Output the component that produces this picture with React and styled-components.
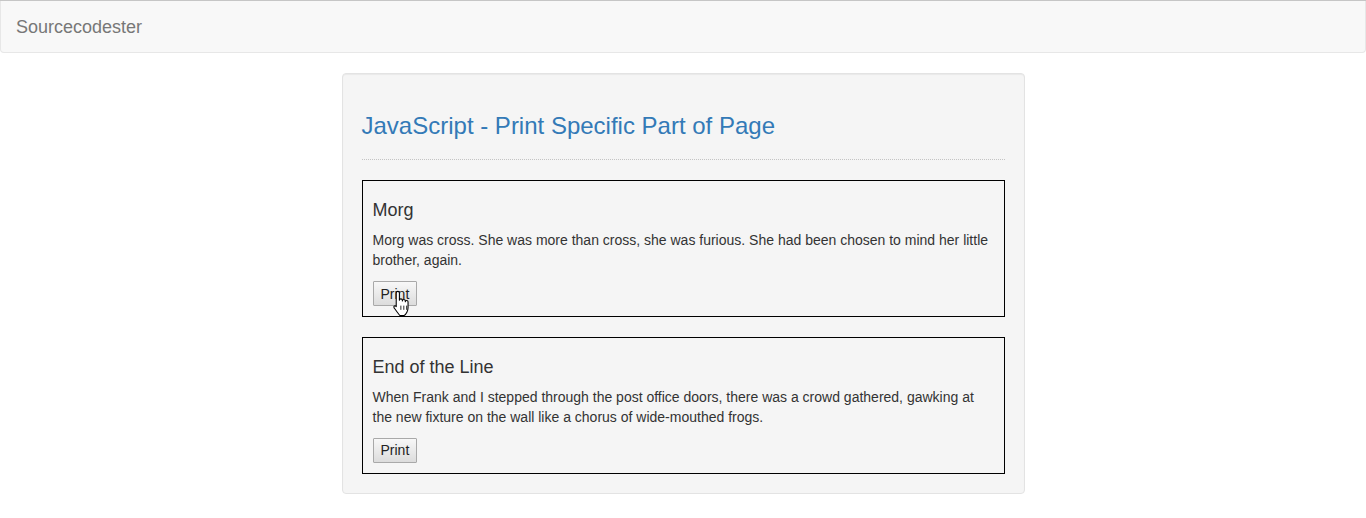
import styled, { createGlobalStyle } from "styled-components"

const GlobalStyle = createGlobalStyle`
html, body {
    margin: 0;
    padding: 0;
    background: #fff;
}
body {
    border-top: 1px solid #c6c6c6;
    font-family: "Liberation Sans", Arial, Helvetica, sans-serif;
    font-size: 14px;
    line-height: 1.42857;
    color: #333;
}
`;

const Navbar = styled.nav`
display: flex;
align-items: center;
height: 51px;
background-color: #f8f8f8;
border: 1px solid #e7e7e7;
border-top: none;
border-radius: 0 0 4px 4px;
margin-bottom: 20px;
padding: 0 15px;
.brand{
    font-size: 18px;
    color: #777;
    text-decoration: none;
    line-height: 20px;
}
`;

const Row = styled.div`
display: flex;
justify-content: center;
`;

const Well = styled.div`
box-sizing: border-box;
width: 50%;
min-height: 20px;
padding: 19px;
background-color: #f5f5f5;
border: 1px solid #e3e3e3;
border-radius: 4px;
box-shadow: inset 0 1px 1px rgba(0,0,0,.05);
h3{
    margin: 20px 0 10px;
    font-size: 24px;
    font-weight: 500;
    line-height: 1.1;
    color: #337ab7;
}
hr{
    margin: 20px 0;
    border: 0;
    border-top: 1px dotted #c4c4c4;
}
`;

const Stack = styled.div`
display: flex;
flex-direction: column;
gap: 20px;
`;

const Story = styled.div`
position: relative;
padding: 10px;
border: 1px solid #000;
h4{
    margin: 10px 0;
    font-size: 18px;
    font-weight: 500;
    line-height: 1.1;
}
p{
    margin: 0 0 10px;
}
`;

const PrintButton = styled.button`
font-family: "Liberation Sans", Arial, sans-serif;
font-size: 14px;
line-height: 20px;
color: #222;
padding: 1px 7px;
height: 25px;
border: 1px solid #a9a9a9;
border-radius: 1px;
background: linear-gradient(#f8f8f8, #dcdcdc);
cursor: pointer;
`;

const Cursor = styled.svg`
position: absolute;
left: 29px;
top: 108px;
width: 19px;
height: 29px;
pointer-events: none;
`;

function HandCursor(){
    return(
        <Cursor viewBox="0 0 18 26">
            <path
                d="M5.5 1.5c.9 0 1.5.6 1.5 1.5v7c0-.9.6-1.4 1.4-1.4s1.4.5 1.4 1.4v.6c0-.8.6-1.3 1.4-1.3s1.4.5 1.4 1.3v.7c0-.7.6-1.2 1.3-1.2s1.3.5 1.3 1.3V17c0 2.5-1.6 6.5-4 7.5H7.6c-1.4-1.4-4.6-6-5.6-7.4-.8-1.1.4-2.4 1.6-1.6L4 16V3c0-.9.6-1.5 1.5-1.5z"
                fill="#fff" stroke="#000" strokeWidth="1" strokeLinejoin="round"
            />
            <path d="M8.4 15v4M11.2 15v4M13.9 15v4" stroke="#000" strokeWidth="0.8" />
        </Cursor>
    )
}

const stories = [
    {
        title: 'Morg',
        text: 'Morg was cross. She was more than cross, she was furious. She had been chosen to mind her little brother, again.',
        hover: true,
    },
    {
        title: 'End of the Line',
        text: 'When Frank and I stepped through the post office doors, there was a crowd gathered, gawking at the new fixture on the wall like a chorus of wide-mouthed frogs.',
    },
];

export default function App(){
    return(
        <>
            <GlobalStyle />
            <Navbar>
                <a href="#" className="brand">Sourcecodester</a>
            </Navbar>
            <Row>
                <Well>
                    <h3>JavaScript - Print Specific Part of Page</h3>
                    <hr />
                    <Stack>
                        {stories.map((s) => (
                            <Story key={s.title}>
                                <h4>{s.title}</h4>
                                <p>{s.text}</p>
                                <PrintButton onClick={() => window.print()}>Print</PrintButton>
                                {s.hover && <HandCursor />}
                            </Story>
                        ))}
                    </Stack>
                </Well>
            </Row>
        </>
    )
}
